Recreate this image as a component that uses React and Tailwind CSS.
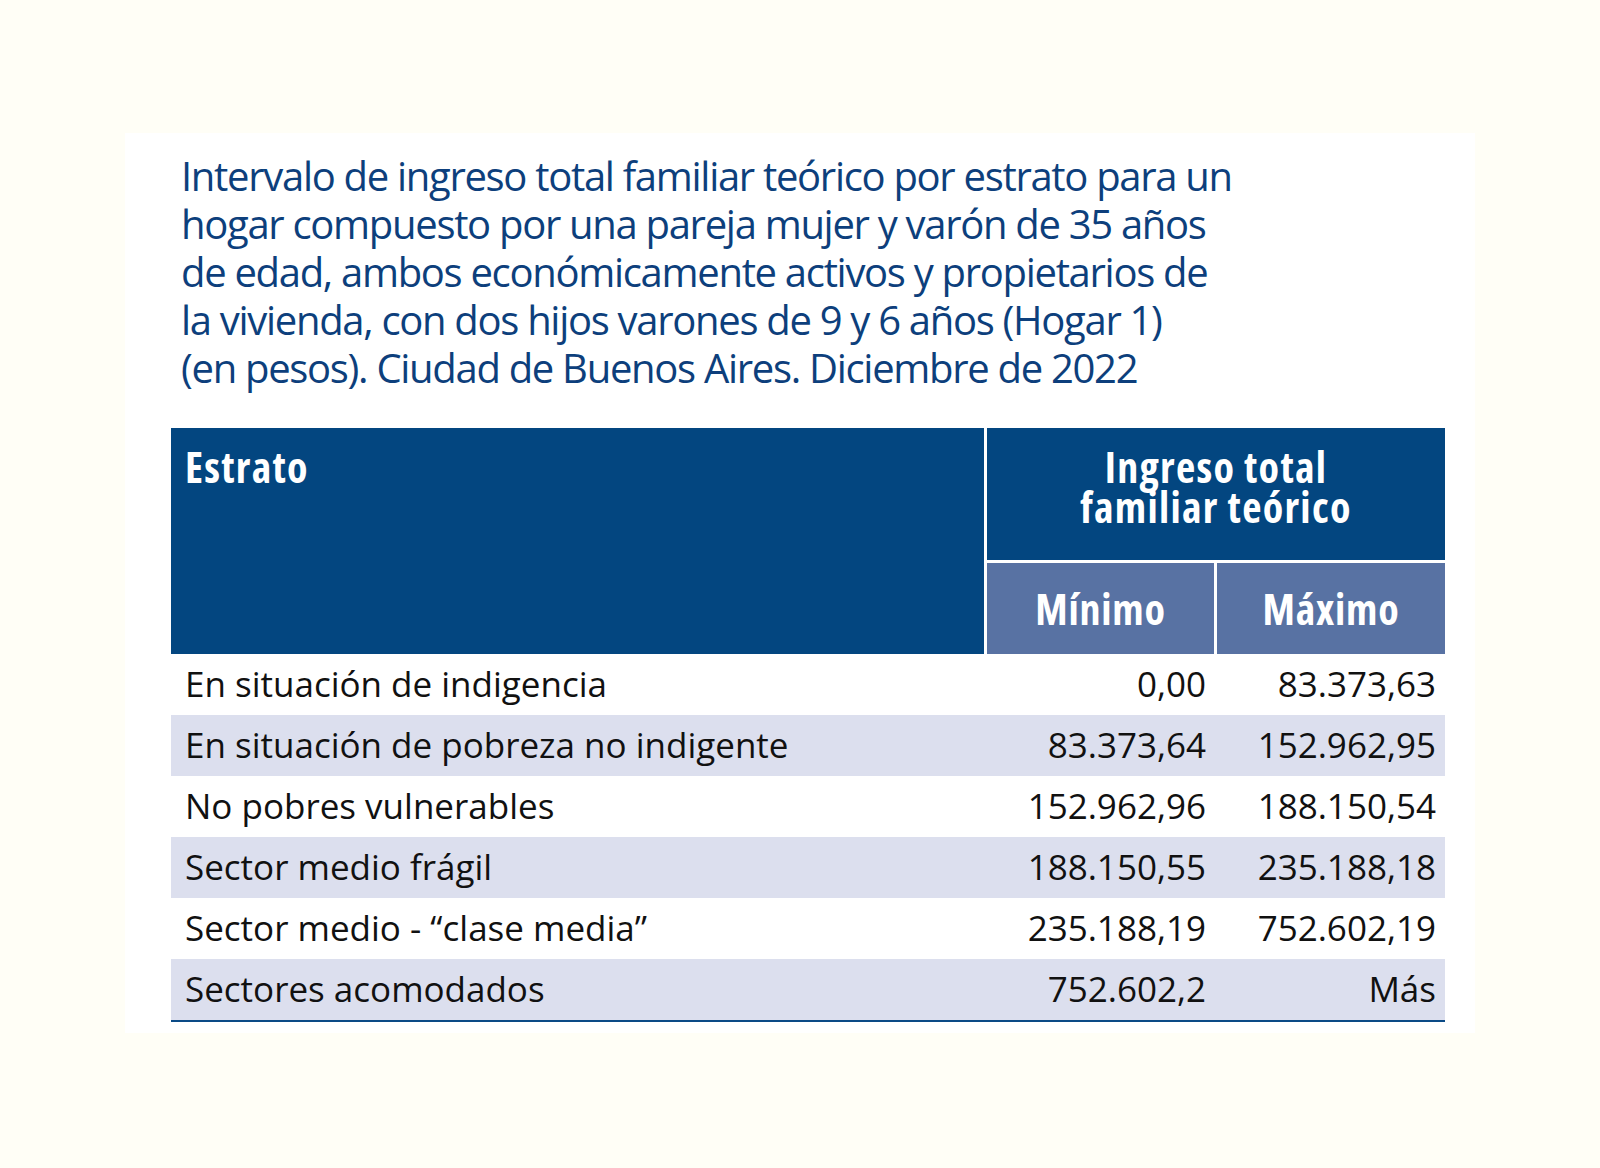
import React from "react";

const rows = [
  ["En situación de indigencia", "0,00", "83.373,63"],
  ["En situación de pobreza no indigente", "83.373,64", "152.962,95"],
  ["No pobres vulnerables", "152.962,96", "188.150,54"],
  ["Sector medio frágil", "188.150,55", "235.188,18"],
  ["Sector medio - “clase media”", "235.188,19", "752.602,19"],
  ["Sectores acomodados", "752.602,2", "Más"],
];

const head = { fontFamily: "'Open Sans', sans-serif", fontStretch: "condensed" };
const label = { fontFamily: "'Open Sans', sans-serif" };
const num = { fontFamily: "'Open Sans', sans-serif", fontStretch: "95%" };

export default function App() {
  return (
    <div className="min-h-[1168px] w-[1600px] bg-[#fffef6] pt-[133px]">
      <div className="ml-[125px] w-[1350px] h-[900px] bg-white pt-[19px]">
        <h1
          className="ml-[56px] whitespace-nowrap text-[40px] leading-[48px] tracking-[-1.3px] text-[#0d3f7c]"
          style={{ fontFamily: "'Open Sans', sans-serif" }}
        >
          Intervalo de ingreso total familiar teórico por estrato para un
          <br />
          hogar compuesto por una pareja mujer y varón de 35 años
          <br />
          de edad, ambos económicamente activos y propietarios de
          <br />
          la vivienda, con dos hijos varones de 9 y 6 años (Hogar 1)
          <br />
          (en pesos). Ciudad de Buenos Aires. Diciembre de 2022
        </h1>

        <div className="ml-[46px] mt-[36px] w-[1274px] border-b-2 border-[#0a4a86]">
          <div className="grid grid-cols-[813px_3px_458px] h-[226px] bg-[#034680]">
            <div
              className="pl-[14px] pt-[17px] text-[42px] font-bold text-white leading-[44px] tracking-[1.3px]"
              style={head}
            >
              Estrato
            </div>
            <div className="bg-white" />
            <div className="flex flex-col">
              <div
                className="h-[132px] pt-[19px] text-center text-[42px] font-bold text-white leading-[40px] tracking-[1.3px]"
                style={head}
              >
                Ingreso total
                <br />
                familiar teórico
              </div>
              <div className="flex-1 grid grid-cols-[227px_3px_228px] border-t-[3px] border-white">
                <div
                  className="bg-[#5872a3] flex items-center justify-center text-[42px] font-bold text-white tracking-[0.8px]"
                  style={head}
                >
                  Mínimo
                </div>
                <div className="bg-white" />
                <div
                  className="bg-[#5872a3] flex items-center justify-center text-[42px] font-bold text-white tracking-[0.8px]"
                  style={head}
                >
                  Máximo
                </div>
              </div>
            </div>
          </div>

          {rows.map((r, i) => (
            <div
              key={i}
              className={`grid grid-cols-[816px_227px_231px] h-[61px] items-center text-[#111] ${
                i % 2 === 1 ? "bg-[#dcdfee]" : "bg-white"
              }`}
            >
              <div className="pl-[14px] text-[35px]" style={label}>
                {r[0]}
              </div>
              <div className="pr-[8px] text-right text-[35px]" style={num}>
                {r[1]}
              </div>
              <div className="pr-[9px] text-right text-[35px]" style={num}>
                {r[2]}
              </div>
            </div>
          ))}
        </div>
      </div>
    </div>
  );
}
